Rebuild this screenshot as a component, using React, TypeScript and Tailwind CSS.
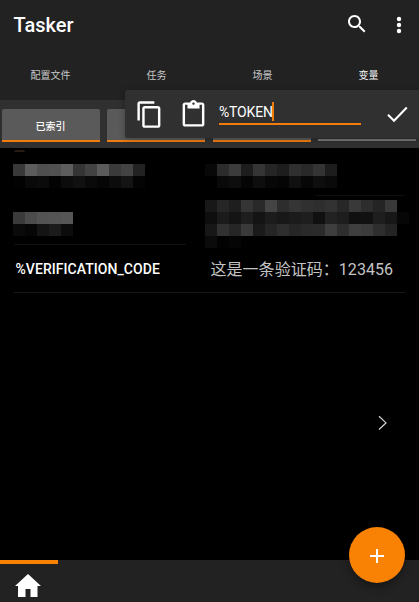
import React from 'react';

const tabs = ['配置文件', '任务', '场景', '变量'];

const nameA = [
  ['#383838', '#5c5c5c', '#4f4f4f', '#515151', '#5d5d5d', '#343434', '#424242', '#5b5b5b', '#3a3a3a', '#434343', '#222222'],
  ['#020202', '#090909', '#0b0b0b', '#030303', '#0c0c0c', '#111111', '#0a0a0a', '#060606', '#0c0c0c', '#141414', '#040404'],
];
const nameB = [
  ['#3a3a3a', '#4b4b4b', '#535353', '#545454', '#565656'],
  ['#0a0a0a', '#060606', '#141414', '#1b1b1b', '#0c0c0c'],
];
const valueA = [
  ['#080808', '#2c2c2c', '#3c3c3c', '#1d1d1d', '#353535', '#252525', '#1d1d1d', '#2f2f2f', '#292929', '#343434', '#1d1d1d'],
  ['#000000', '#090909', '#0e0e0e', '#050505', '#0e0e0e', '#070707', '#050505', '#101010', '#070707', '#0e0e0e', '#0a0a0a'],
];
const valueB = [
  ['#181818', '#262626', '#1e1e1e', '#353535', '#292929', '#444444', '#2d2d2d', '#353535', '#303030', '#2e2e2e', '#323232', '#272727', '#393939', '#2d2d2d', '#242424', '#393939'],
  ['#0e0e0e', '#1b1b1b', '#141414', '#1e1e1e', '#141414', '#1c1c1c', '#181818', '#1b1b1b', '#1e1e1e', '#101010', '#222222', '#1d1d1d', '#101010', '#111111', '#1e1e1e', '#171717', '#060606'],
  ['#171717', '#313131', '#262626', '#393939', '#1a1a1a', '#252525', '#2e2e2e', '#262626', '#2a2a2a', '#2b2b2b', '#3e3e3e', '#2e2e2e', '#3f3f3f', '#3b3b3b', '#2e2e2e', '#242424'],
  ['#0b0b0b', '#020202', '#050505'],
];

function Mosaic({ rows }: { rows: string[][] }) {
  return (
    <div className="flex shrink-0 flex-col">
      {rows.map((row, y) => (
        <div key={y} className="flex h-3 shrink-0">
          {row.map((color, x) => (
            <span key={x} className="h-3 w-3 shrink-0" style={{ backgroundColor: color }} />
          ))}
        </div>
      ))}
    </div>
  );
}

function EditPopup() {
  return (
    <div className="absolute left-[125px] top-[90px] flex h-12 w-[294px] rounded-l-[2px] bg-[#303030] shadow-[0_1px_7px_rgba(0,0,0,0.3)]">
      <svg className="ml-[9.5px] mt-[9.8px] h-[29px] w-[29px] shrink-0" viewBox="0 0 24 24" fill="#fff">
        <path d="M16 1H4C2.9 1 2 1.9 2 3v14h2V3h12V1zm3 4H8c-1.1 0-2 .9-2 2v14c0 1.1.9 2 2 2h11c1.1 0 2-.9 2-2V7c0-1.1-.9-2-2-2zm0 16H8V7h11v14z" />
      </svg>
      <svg className="ml-[15.2px] mt-[10px] h-[29px] w-[29px] shrink-0" viewBox="0 0 24 24" fill="#fff">
        <path d="M19 2h-4.18C14.4.84 13.3 0 12 0S9.6.84 9.18 2H5c-1.1 0-2 .9-2 2v16c0 1.1.9 2 2 2h14c1.1 0 2-.9 2-2V4c0-1.1-.9-2-2-2zm-7 0c.55 0 1 .45 1 1s-.45 1-1 1-1-.45-1-1 .45-1 1-1zm7 18H5V4h2v3h10V4h2v16z" />
      </svg>
      <div className="ml-[11.3px] mt-3 flex h-[23px] w-[142px] items-start border-b-2 border-[#f27c0b]">
        <span className="mt-px w-[53.5px] whitespace-nowrap text-[14px] leading-[18px] tracking-[-0.15px] text-white">%TOKEN</span>
        <span className="h-[19px] w-[2px] bg-[#f27c0b]" />
      </div>
      <svg className="ml-[26px] mt-4 h-[18px] w-[22px] shrink-0" viewBox="0 0 22 18" fill="none" stroke="#fff" strokeWidth="2.1">
        <path d="M1 8.7l6 6L19.8 1.6" />
      </svg>
    </div>
  );
}

export default function App() {
  return (
    <div className="relative flex h-[602px] w-[419px] flex-col overflow-hidden bg-black font-['Roboto','Noto_Sans_CJK_SC',sans-serif]">
      <header className="h-[100px] shrink-0 bg-[#222222]">
        <div className="flex h-[50px] items-center pl-[13.5px]">
          <h1 className="grow text-[20px] font-medium leading-6 text-white">Tasker</h1>
          <svg className="mt-[-3px] h-6 w-6" viewBox="0 0 24 24" fill="#fff">
            <path d="M15.5 14h-.79l-.28-.27C15.41 12.59 16 11.11 16 9.5 16 5.91 13.09 3 9.5 3S3 5.91 3 9.5 5.91 16 9.5 16c1.61 0 3.09-.59 4.23-1.57l.27.28v.79l5 4.99L20.49 19l-4.99-5zm-6 0C7.01 14 5 11.99 5 9.5S7.01 5 9.5 5 14 7.01 14 9.5 11.99 14 9.5 14z" />
          </svg>
          <svg className="ml-[18px] mr-2 mt-[-1px] h-6 w-6" viewBox="0 0 24 24" fill="#fff">
            <circle cx="12" cy="6" r="2.2" />
            <circle cx="12" cy="12" r="2.2" />
            <circle cx="12" cy="18" r="2.2" />
          </svg>
        </div>
        <nav className="ml-[-2.5px] flex h-[50px] w-[424px]">
          {tabs.map((tab, i) => (
            <span key={tab} className={`flex-1 pt-[18px] text-center text-[10px] leading-4 ${i === 3 ? 'text-[#efefef]' : 'text-[#c8c8c8]'}`}>
              {tab}
            </span>
          ))}
        </nav>
      </header>

      <div className="flex h-12 shrink-0 gap-[7.4px] bg-[#303030] pl-[2px] pt-[9px]">
        <div className="flex h-[33px] w-[98px] shrink-0 items-center justify-center rounded-t-[2px] border-b-2 border-[#f27c0b] bg-[#5a5a5b] pr-px pt-[4px] text-[10px] font-medium text-white">
          已索引
        </div>
        <div className="h-[33px] w-[98px] shrink-0 rounded-t-[2px] border-b-2 border-[#ee7c10] bg-[#5a5a5b]" />
        <div className="h-[33px] w-[98px] shrink-0 rounded-t-[2px] border-b-2 border-[#ee7c10] bg-[#5a5a5b]" />
        <div className="mt-[30px] h-[2px] w-[98px] shrink-0 bg-[#757575]" />
      </div>

      <main className="flex grow flex-col bg-black">
        <div className="flex h-4 shrink-0 pl-[14px] pt-[2px]">
          <span className="h-[2px] w-[11px] rounded-t-full bg-[#2a1b12]" />
        </div>
        <div className="flex h-20 shrink-0 pl-[13px]">
          <div className="flex w-48 shrink-0 flex-col gap-6">
            <Mosaic rows={nameA} />
            <Mosaic rows={nameB} />
          </div>
          <div className="flex flex-col">
            <Mosaic rows={valueA} />
            <div className="flex h-3 shrink-0 pl-[110px] pt-[7px]">
              <span className="h-px w-[90px] bg-[#0e0e0e]" />
            </div>
            <Mosaic rows={valueB} />
          </div>
        </div>
        <div className="ml-[14px] h-px w-[172px] shrink-0 bg-[#111111]" />
        <div className="ml-[14px] flex h-12 w-[391px] shrink-0 border-b border-[#171717] pt-[14px]">
          <span className="w-[196.5px] shrink-0 pl-[1.5px] text-[14px] font-medium leading-5 tracking-[0.05px] text-white">%VERIFICATION_CODE</span>
          <span className="whitespace-nowrap pt-px text-[16px] leading-5 tracking-[0.04px] text-[#c4c4c4]">这是一条验证码：123456</span>
        </div>
        <div className="flex grow items-start justify-end pr-[31px] pt-[122px]">
          <svg className="h-4 w-[10px]" viewBox="0 0 10 16" fill="none" stroke="#d5d5d5" strokeWidth="1.2">
            <path d="M1 1.3L8 7.9L1 14.5" />
          </svg>
        </div>
      </main>

      <footer className="flex h-[42px] shrink-0 flex-col bg-[#222222]">
        <div className="h-1 w-[58px] bg-[#f98103]" />
        <svg className="ml-[15px] mt-[10px] h-[23px] w-[26px]" viewBox="0 0 26 23" fill="#fff">
          <path d="M13 0L26 12H22.5V23H15.5V15H10.5V23H3V12H0Z" />
        </svg>
      </footer>

      <EditPopup />
      <button className="absolute left-[349px] top-[527px] flex h-14 w-14 items-center justify-center rounded-full bg-[#f98103] shadow-[0_4px_8px_rgba(0,0,0,0.35)]">
        <svg className="mt-px h-[14px] w-[14px]" viewBox="0 0 14 14" stroke="#fff" strokeWidth="2">
          <path d="M7 0V14M0 7H14" />
        </svg>
      </button>
    </div>
  );
}
